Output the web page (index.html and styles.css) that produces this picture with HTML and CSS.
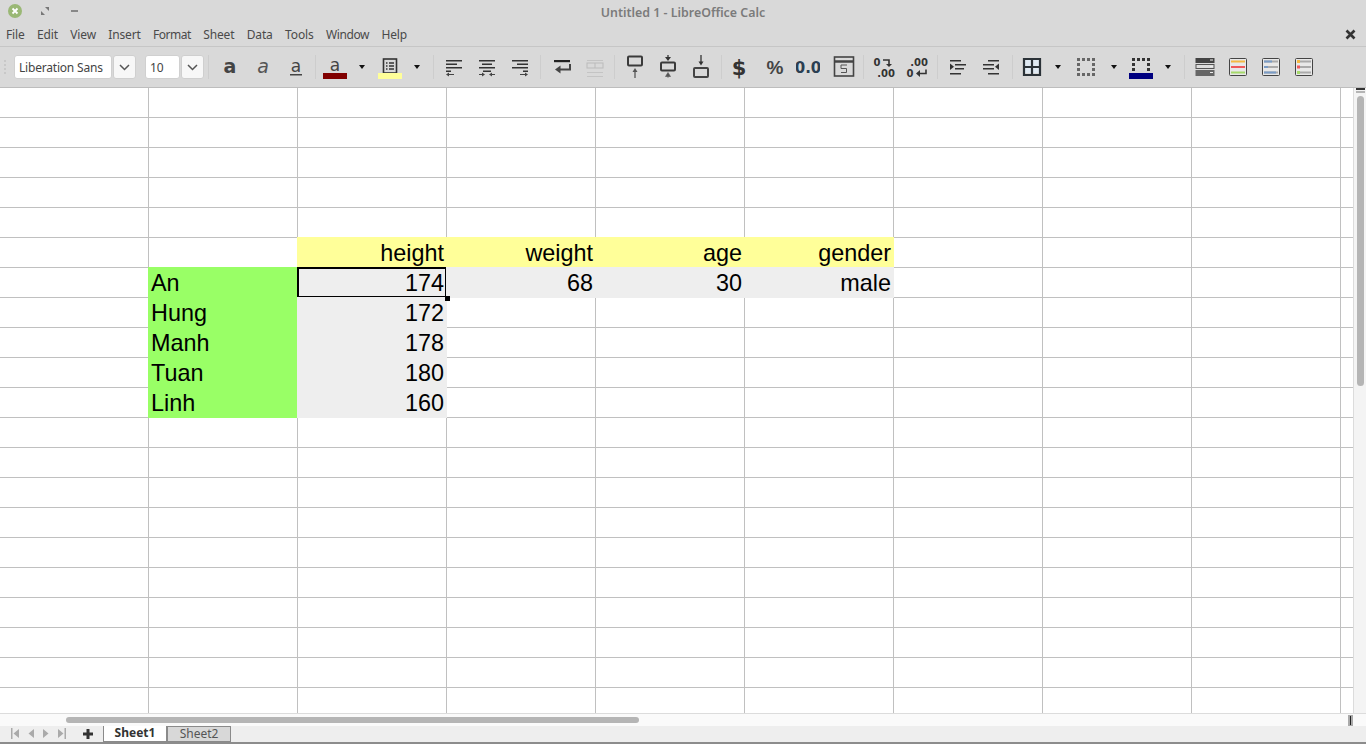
FILE: index.html
```html
<!DOCTYPE html>
<html lang="en">
<head>
    <meta charset="UTF-8">
    <title>Untitled 1 - LibreOffice Calc</title>
    <link rel="stylesheet" href="styles.css">
</head>
<body>
<div class="window">
    <header class="titlebar">
        <div class="win-btns">
            <svg class="win-close" width="14" height="14" viewBox="0 0 14 14"><circle cx="7" cy="7" r="7" fill="#9ab875"/><path d="M4.5 4.5l5 5M9.5 4.5l-5 5" stroke="#fff" stroke-width="1.8"/></svg>
            <svg class="win-max" width="8" height="8" viewBox="0 0 8 8"><path d="M4 0h4v4zM0 4l4 4H0z" fill="#777"/></svg>
            <svg class="win-min" width="8" height="8" viewBox="0 0 8 8"><rect y="3" width="7" height="2" fill="#888"/></svg>
        </div>
        <div class="title">Untitled 1 - LibreOffice Calc</div>
    </header>

    <nav class="menubar">
        <span>File</span><span>Edit</span><span>View</span><span>Insert</span><span>Format</span><span>Sheet</span><span>Data</span><span>Tools</span><span>Window</span><span>Help</span>
        <svg class="doc-close" width="11" height="11" viewBox="0 0 11 11"><path d="M1.5 1.5l8 8M9.5 1.5l-8 8" stroke="#333" stroke-width="2.6"/></svg>
    </nav>

    <div class="toolbar">
        <div class="grip"></div>
        <div class="combo font-name">Liberation Sans</div>
        <div class="combo-btn"><svg width="11" height="7" viewBox="0 0 11 7"><path d="M1 1l4.500 4.500L10 1" fill="none" stroke="#555" stroke-width="1.500"/></svg></div>
        <div class="combo font-size">10</div>
        <div class="combo-btn"><svg width="11" height="7" viewBox="0 0 11 7"><path d="M1 1l4.500 4.500L10 1" fill="none" stroke="#555" stroke-width="1.500"/></svg></div>
        <i class="sep ml4"></i>

        <div class="btn ml4"><svg class="ic" viewBox="0 0 24 24"><text x="12" y="18" class="ic-bold">a</text></svg></div>
        <div class="btn"><svg class="ic" viewBox="0 0 24 24"><text x="12" y="18" class="ic-italic">a</text></svg></div>
        <div class="btn"><svg class="ic" viewBox="0 0 24 24"><text x="12" y="17" class="ic-thin">a</text><rect x="6" y="19" width="12" height="1.500" fill="#444"/></svg></div>
        <i class="sep ml3"></i>

        <div class="btn w34 ml2"><svg class="ic" viewBox="0 0 24 24"><text x="12" y="16" class="ic-thin">a</text><rect y="18" width="24" height="6" fill="#800000"/></svg></div>
        <div class="drop"></div>
        <div class="btn w34 ml1"><svg class="ic" viewBox="0 0 24 24"><rect x="5.500" y="4" width="13" height="14" fill="none" stroke="#333" stroke-width="1.600"/><path d="M8 8h1.500M11 8h5M8 11h1.500M11 11h5M8 14h1.500M11 14h5" stroke="#333" stroke-width="1.300"/><rect y="18" width="24" height="6" fill="#ffff99"/></svg></div>
        <div class="drop"></div>
        <i class="sep ml6"></i>

        <div class="btn ml3"><svg class="ic" viewBox="0 0 24 24"><path d="M4 5h16v1.500H4zM4 8.500h11V10H4zM4 12h16v1.500H4zM4 15.500h5V17H4z" fill="#333"/><path d="M4 19.500l3-2v1.500h5v1H7V21.500z" fill="#444"/></svg></div>
        <div class="btn"><svg class="ic" viewBox="0 0 24 24"><path d="M4 5h16v1.500H4zM7 8.500h10V10H7zM4 12h16v1.500H4zM8 15.500h8V17H8z" fill="#333"/><path d="M4 19h3v-1.500l3 2-3 2V20H4zM20 19h-3v-1.500l-3 2 3 2V20h3z" fill="#444"/></svg></div>
        <div class="btn"><svg class="ic" viewBox="0 0 24 24"><path d="M4 5h16v1.500H4zM9 8.500h11V10H9zM4 12h16v1.500H4zM15 15.500h5V17h-5z" fill="#333"/><path d="M20 19.500l-3-2v1.500h-5v1h5v1.500z" fill="#444"/></svg></div>
        <i class="sep ml4"></i>

        <div class="btn ml4"><svg class="ic" viewBox="0 0 24 24"><path d="M4 5h16v2.200H4z" fill="#222"/><path d="M20 9v5.500H10" fill="none" stroke="#444" stroke-width="2"/><path d="M5 14.500l5.500-4v8z" fill="#444"/></svg></div>
        <div class="btn"><svg class="ic" viewBox="0 0 24 24"><path d="M4 5h16v1H4zM4 17h16v1H4zM4 21h16v1H4z" fill="#c4c4c4"/><rect x="4" y="8" width="16" height="5" fill="none" stroke="#bbb"/><path d="M12 8v5" stroke="#bbb"/></svg></div>
        <i class="sep ml3"></i>

        <div class="btn ml3"><svg class="ic" viewBox="0 0 24 24"><rect x="5" y="1.500" width="14" height="9" rx="1" fill="none" stroke="#3a3a3a" stroke-width="2"/><path d="M12 23v-7" stroke="#555" stroke-width="1.300"/><path d="M9.500 17l2.500-4 2.500 4z" fill="#555"/></svg></div>
        <div class="btn"><svg class="ic" viewBox="0 0 24 24"><rect x="5" y="7.500" width="14" height="8" rx="1" fill="none" stroke="#3a3a3a" stroke-width="2"/><path d="M12 0v2" stroke="#333" stroke-width="1.300"/><path d="M9 2h6l-3 4z" fill="#333"/><path d="M9.500 21.500l2.500-4 2.500 4zM12 21v2" fill="#555" stroke="#555" stroke-width=".6"/></svg></div>
        <div class="btn"><svg class="ic" viewBox="0 0 24 24"><rect x="5" y="13" width="14" height="9" rx="1" fill="none" stroke="#444" stroke-width="2"/><path d="M12 0v7" stroke="#333" stroke-width="1.300"/><path d="M9.500 6.500h5L12 10.500z" fill="#333"/></svg></div>
        <i class="sep ml4"></i>

        <div class="btn"><svg class="ic" viewBox="0 0 24 24"><text x="12" y="20" class="ic-dollar">$</text></svg></div>
        <div class="btn ml3"><svg class="ic" viewBox="0 0 24 24"><text x="12" y="19" class="ic-pct">%</text></svg></div>
        <div class="btn"><svg class="ic" viewBox="0 0 24 24"><text x="12" y="18" class="ic-num">0.0</text></svg></div>
        <div class="btn ml3"><svg class="ic" viewBox="0 0 24 24"><rect x="2.500" y="2" width="19" height="19" fill="none" stroke="#444" stroke-width="1.600"/><path d="M2.500 6.500h19" stroke="#444" stroke-width="2.500"/><path d="M6 4h3M15 4h3" stroke="#ddd" stroke-width="1"/><path d="M15 10h-6v3.500h5.500v4H9" fill="none" stroke="#555"/></svg></div>
        <i class="sep ml3"></i>

        <div class="btn ml3"><svg class="ic" viewBox="0 0 24 24"><text x="5" y="11" class="ic-dec">0</text><path d="M11 5h6v5" fill="none" stroke="#333" stroke-width="1.600"/><path d="M14 9h6l-3 3z" fill="#333"/><text x="14" y="22" class="ic-dec">.00</text></svg></div>
        <div class="btn"><svg class="ic" viewBox="0 0 24 24"><text x="14" y="11" class="ic-dec">.00</text><text x="5" y="22" class="ic-dec">0</text><path d="M21 14.500v4h-7" fill="none" stroke="#333" stroke-width="1.600"/><path d="M15 15v7l-4-3.500z" fill="#333"/></svg></div>
        <i class="sep ml4"></i>

        <div class="btn ml3"><svg class="ic" viewBox="0 0 24 24"><path d="M4 5h11v1.500H4zM9 9h11v1.500H9zM9 13h9v1.500H9zM4 18h11v1.500H4z" fill="#333"/><path d="M4 8.500l4 3.200-4 3.200z" fill="#333"/></svg></div>
        <div class="btn"><svg class="ic" viewBox="0 0 24 24"><path d="M9 5h11v1.500H9zM4 9h11v1.500H4zM4 13h11v1.500H4zM9 18h11v1.500H9z" fill="#333"/><path d="M20 8.500l-4 3.200 4 3.200z" fill="#333"/></svg></div>
        <i class="sep ml5"></i>

        <div class="btn ml2"><svg class="ic" viewBox="0 0 24 24"><rect x="5" y="4" width="14" height="14" fill="#dfe9f2"/><path d="M4.500 12h15M12 4v16M4 4h16v16H4z" fill="none" stroke="#2b3238" stroke-width="2.200"/></svg></div>
        <div class="drop"></div>
        <div class="btn w36"><svg class="ic" viewBox="0 0 24 24"><path d="M3 3h3v3H3zM8 3h3v3H8zM13 3h3v3h-3zM18 3h3v3h-3zM3 8h3v3H3zM18 8h3v3h-3zM3 13h3v3H3zM18 13h3v3h-3zM3 18h3v3H3zM8 18h3v3H8zM13 18h3v3h-3zM18 18h3v3h-3z" fill="#666"/></svg></div>
        <div class="drop"></div>
        <div class="btn w34"><svg class="ic" viewBox="0 0 24 24"><path d="M3 3h3v3H3zM8 3h3v3H8zM13 3h3v3h-3zM18 3h3v3h-3zM3 8h3v3H3zM18 8h3v3h-3zM3 13h3v3H3zM18 13h3v3h-3z" fill="#333"/><rect y="18" width="24" height="6" fill="#000080"/></svg></div>
        <div class="drop"></div>
        <i class="sep ml6"></i>

        <div class="btn ml3"><svg class="ic" viewBox="0 0 24 24"><rect x="2.500" y="3" width="19" height="5" fill="#444"/><rect x="3" y="9.500" width="18" height="4" fill="#ddd" stroke="#555"/><rect x="2.500" y="15" width="19" height="6" fill="#666"/><path d="M17 5h3M17 11.500h3M17 17.500h3" stroke="#eee"/></svg></div>
        <div class="btn"><svg class="ic" viewBox="0 0 24 24"><rect x="3.500" y="3.500" width="17" height="17" rx="1" fill="#e8e8e8" stroke="#444"/><path d="M5 6.500h14" stroke="#f5b942" stroke-width="2"/><path d="M5 12h14" stroke="#ef5a5a" stroke-width="2"/><path d="M5 17.500h14" stroke="#a5d96a" stroke-width="2"/></svg></div>
        <div class="btn"><svg class="ic" viewBox="0 0 24 24"><rect x="3.500" y="3.500" width="17" height="17" rx="1" fill="#e8e8e8" stroke="#444"/><path d="M5 6.500h14M5 12h14M5 17.500h14" stroke="#aaa" stroke-width="2"/><path d="M5 6.500h8M5 12h4M5 17.500h12" stroke="#7a9cc6" stroke-width="2"/></svg></div>
        <div class="btn"><svg class="ic" viewBox="0 0 24 24"><rect x="3.500" y="3.500" width="17" height="17" rx="1" fill="#e8e8e8" stroke="#444"/><path d="M8 6.500h11M8 12h11M8 17.500h11" stroke="#aaa" stroke-width="2"/><path d="M5 6.500h3" stroke="#f5b942" stroke-width="3"/><path d="M5 12h3" stroke="#ef5a5a" stroke-width="3"/><path d="M5 17.500h3" stroke="#a5d96a" stroke-width="3"/></svg></div>
    </div>

    <main class="sheet-area">
        <div class="sheet">
            <div class="cell yellow r6 c3">height</div>
            <div class="cell yellow r6 c4">weight</div>
            <div class="cell yellow r6 c5">age</div>
            <div class="cell yellow r6 c6">gender</div>

            <div class="cell green text r7 c2">An</div>
            <div class="cell gray active r7 c3">174</div>
            <div class="cell gray r7 c4">68</div>
            <div class="cell gray r7 c5">30</div>
            <div class="cell gray r7 c6">male</div>

            <div class="cell green text r8 c2">Hung</div>
            <div class="cell gray r8 c3">172</div>
            <div class="cell green text r9 c2">Manh</div>
            <div class="cell gray r9 c3">178</div>
            <div class="cell green text r10 c2">Tuan</div>
            <div class="cell gray r10 c3">180</div>
            <div class="cell green text r11 c2">Linh</div>
            <div class="cell gray r11 c3">160</div>
        </div>
        <div class="vscroll">
            <div class="split-top"></div>
            <div class="vthumb"></div>
        </div>
    </main>

    <div class="hscroll">
        <div class="hthumb"></div>
        <div class="split-right"></div>
    </div>

    <footer class="tabbar">
        <div class="tab-nav">
            <svg width="10" height="11" viewBox="0 0 10 11"><path d="M1 0h1.500v11H1zM9 1v9L3.500 5.500z" fill="#aaa"/></svg>
            <svg width="8" height="11" viewBox="0 0 8 11"><path d="M7 1v9L1.500 5.500z" fill="#aaa"/></svg>
            <svg width="8" height="11" viewBox="0 0 8 11"><path d="M1 1v9l5.500-4.500z" fill="#aaa"/></svg>
            <svg width="10" height="11" viewBox="0 0 10 11"><path d="M1 1v9l5.500-4.500zM7.500 0H9v11H7.500z" fill="#aaa"/></svg>
            <svg class="tab-add" width="10" height="10" viewBox="0 0 10 10"><path d="M3.500 0h3v3.500H10v3H6.500V10h-3V6.500H0v-3h3.500z" fill="#333"/></svg>
        </div>
        <div class="tab tab-on">Sheet1</div>
        <div class="tab tab-off">Sheet2</div>
    </footer>
</div>
</body>
</html>
```

FILE: styles.css
```css
* {
    box-sizing: border-box;
}

body {
    margin: 0;
    background-color: #d9d9d9;
    font-family: "Noto Sans", sans-serif;
}

.window {
    width: 1366px;
    height: 744px;
    overflow: hidden;
    display: flex;
    flex-direction: column;
}

/* title + menu */
.titlebar {
    height: 24px;
    position: relative;
    display: flex;
    align-items: center;
    justify-content: center;
}

.win-btns {
    position: absolute;
    left: 8px;
    top: 4px;
    display: flex;
    align-items: center;
}

.win-max {
    margin-left: 19px;
}

.win-min {
    margin-left: 22px;
}

.title {
    font-size: 12.4px;
    font-weight: 600;
    color: #7b7b7b;
}

.menubar {
    height: 23px;
    padding: 0 0 2px 6px;
    border-bottom: 1px solid #c6c6c6;
    display: flex;
    align-items: center;
    gap: 12.4px;
    font-size: 12px;
    letter-spacing: -0.15px;
    color: #4a4a4a;
}

.menubar span:nth-child(5) {
    letter-spacing: -0.5px;
}

.menubar span:nth-child(9) {
    letter-spacing: -0.4px;
}

.doc-close {
    margin-left: auto;
    margin-right: 10px;
}

/* toolbar */
.toolbar {
    height: 41px;
    padding-left: 14px;
    border-bottom: 1px solid #bdbdbd;
    display: flex;
    align-items: center;
    position: relative;
}

.grip {
    position: absolute;
    left: 4px;
    top: 13px;
    width: 2px;
    height: 14px;
    background: repeating-linear-gradient(#c8c8c8 0 2px, transparent 2px 4px);
}

.combo {
    height: 24px;
    background-color: #fff;
    border: 1px solid #d0d0d0;
    border-radius: 3px;
    padding-left: 4px;
    font-size: 12px;
    line-height: 24px;
    color: #444;
}

.font-name {
    width: 98px;
    letter-spacing: -0.2px;
}

.font-size {
    width: 35px;
    margin-left: 9px;
}

.combo-btn {
    width: 23px;
    height: 24px;
    margin-left: 1px;
    background-color: #f7f7f7;
    border: 1px solid #cfcfcf;
    border-radius: 3px;
    display: flex;
    align-items: center;
    justify-content: center;
}

.sep {
    display: block;
    width: 1px;
    height: 24px;
    background-color: #cdcdcd;
}

.btn {
    width: 33px;
    height: 24px;
    flex: none;
    display: flex;
    justify-content: center;
}

.w34 {
    width: 34px;
}

.w36 {
    width: 36px;
}

.ml1 { margin-left: 1px; }
.ml2 { margin-left: 2px; }
.ml3 { margin-left: 3px; }
.ml4 { margin-left: 4px; }
.ml5 { margin-left: 5px; }
.ml6 { margin-left: 6px; }

.ic {
    width: 24px;
    height: 24px;
    flex: none;
}

.drop {
    width: 20px;
    height: 24px;
    flex: none;
    display: flex;
    align-items: center;
    justify-content: center;
}

.drop::after {
    content: "";
    border-left: 3.5px solid transparent;
    border-right: 3.5px solid transparent;
    border-top: 4px solid #111;
}

.ic text {
    text-anchor: middle;
}

.ic-bold {
    font: bold 19px "DejaVu Sans", sans-serif;
    fill: #444;
}

.ic-italic {
    font: italic 19px "DejaVu Sans", sans-serif;
    fill: #555;
}

.ic-thin {
    font: 17px "DejaVu Sans", sans-serif;
    fill: #444;
}

.ic-dollar {
    font: bold 21px "DejaVu Sans", sans-serif;
    fill: #333;
}

.ic-pct {
    font: bold 19px "Liberation Sans", sans-serif;
    fill: #444;
}

.ic-num {
    font: bold 15px "DejaVu Sans", sans-serif;
    fill: #2b3f52;
}

.ic-dec {
    font: bold 10px "DejaVu Sans", sans-serif;
    fill: #333;
}

/* grid: lines come from the background, only filled cells are elements */
.sheet-area {
    flex: 1;
    min-height: 0;
    display: flex;
}

.sheet {
    flex: 1;
    display: grid;
    grid-template-columns: repeat(9, 149px);
    grid-auto-rows: 30px;
    background-color: #fff;
    background-image:
        linear-gradient(to right, transparent 148px, #c0c0c0 148px),
        linear-gradient(to bottom, transparent 29px, #c0c0c0 29px);
    background-size: 149px 30px;
}

.cell {
    margin: -1px 0 0 -1px;
    padding: 2px 3px 0 2px;
    display: flex;
    align-items: center;
    justify-content: flex-end;
    font-family: "Liberation Sans", Arial, sans-serif;
    font-size: 23.4px;
    color: #000;
    position: relative;
}

.text {
    justify-content: flex-start;
    padding-left: 3px;
}

.yellow { background-color: #ffff99; }
.green { background-color: #99ff66; }
.gray { background-color: #eeeeee; }

.active::after {
    content: "";
    position: absolute;
    inset: 0;
    border: 2px solid #000;
}

.active::before {
    content: "";
    position: absolute;
    right: -3px;
    bottom: -3px;
    width: 5px;
    height: 5px;
    background-color: #000;
    z-index: 1;
}

.r6 { grid-row: 6; }
.r7 { grid-row: 7; }
.r8 { grid-row: 8; }
.r9 { grid-row: 9; }
.r10 { grid-row: 10; }
.r11 { grid-row: 11; }

.c2 { grid-column: 2; }
.c3 { grid-column: 3; }
.c4 { grid-column: 4; }
.c5 { grid-column: 5; }
.c6 { grid-column: 6; }

.vscroll {
    width: 13px;
    border-left: 1px solid #dcdcdc;
    background-color: #f4f4f4;
    display: flex;
    flex-direction: column;
    align-items: center;
}

.split-top {
    width: 9px;
    height: 5px;
    border-top: 2px solid #333;
    border-bottom: 2px solid #b5b5b5;
    flex: none;
}

.vthumb {
    width: 7px;
    height: 290px;
    margin-top: 3px;
    border-radius: 4px;
    background-color: #b5b5b5;
}

/* bottom */
.hscroll {
    height: 13px;
    padding-left: 66px;
    border-top: 1px solid #dcdcdc;
    background-color: #fafafa;
    display: flex;
    align-items: center;
}

.hthumb {
    width: 573px;
    height: 6px;
    border-radius: 3px;
    background-color: #b5b5b5;
}

.split-right {
    width: 5px;
    height: 11px;
    margin-left: auto;
    margin-right: 13px;
    background-color: #aaa;
    background-image: linear-gradient(#222, #222);
    background-size: 1px 9px;
    background-repeat: no-repeat;
    background-position: 2px 1px;
}

.tabbar {
    height: 18px;
    background-color: #eeeeee;
    border-bottom: 2px solid #8c8c8c;
    padding-left: 103px;
    display: flex;
    position: relative;
    font-size: 12px;
}

.tab-nav {
    position: absolute;
    left: 10px;
    top: 2px;
    display: flex;
    align-items: center;
    gap: 7px;
}

.tab-add {
    margin-left: 9px;
}

.tab {
    width: 64px;
    height: 16px;
    line-height: 14px;
    text-align: center;
    border: 1px solid #8a8a8a;
    border-top: 0;
}

.tab-on {
    background-color: #fff;
    color: #333;
    font-weight: 700;
}

.tab-off {
    background-color: #d8d8d8;
    color: #555;
    border-top: 1px solid #8a8a8a;
}
```
